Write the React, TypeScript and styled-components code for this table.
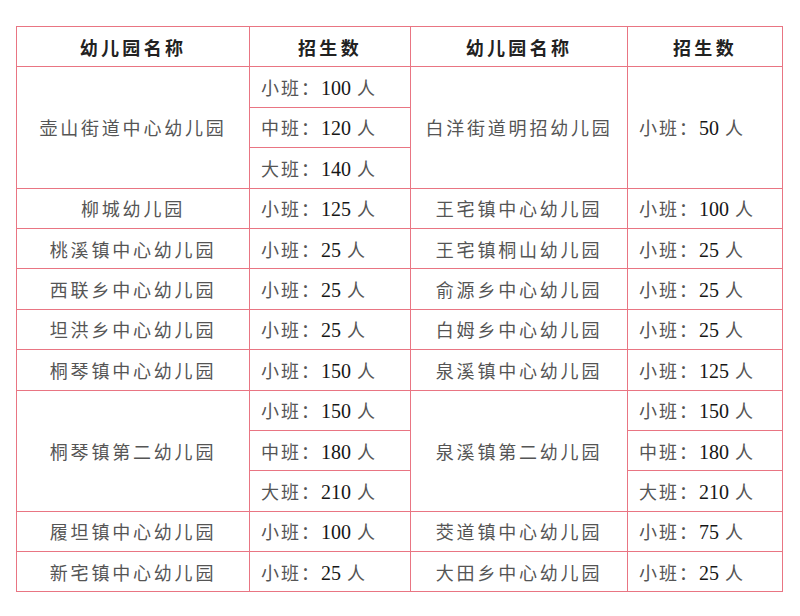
import styled, { createGlobalStyle } from 'styled-components';

const GlobalStyle = createGlobalStyle`
  html, body {
    margin: 0;
    padding: 0;
    background: #ffffff;
  }
`;

const Page = styled.div`
  padding: 26px 0 0 16px;
`;

const Table = styled.table`
  width: 766px;
  border-collapse: collapse;
  table-layout: fixed;
  font-family: "Noto Sans CJK SC", "Liberation Serif", serif;
  font-size: 18px;
  color: #555555;
`;

const Row = styled.tr`
  height: 40.4px;
`;

const HeadCell = styled.th`
  border: 1px solid #e97583;
  padding: 0;
  font-weight: 700;
  color: #222222;
  letter-spacing: 3.3px;
  text-align: center;
`;

const NameCell = styled.td`
  border: 1px solid #e97583;
  padding: 0;
  text-align: center;
  letter-spacing: 2.8px;
  white-space: nowrap;
`;

const CountCell = styled.td`
  border: 1px solid #e97583;
  padding: 0 0 0 11px;
  text-align: left;
  white-space: nowrap;
  letter-spacing: 2px;
`;

const Num = styled.span`
  font-family: "Liberation Serif", serif;
  font-size: 20px;
  color: #161616;
  letter-spacing: 0;
`;

type Count = [string, string];
type Side = { name: string; counts: Count[] };
type Group = { size: number; left: Side; right: Side };

const groups: Group[] = [
  {
    size: 3,
    left: {
      name: '壶山街道中心幼儿园',
      counts: [
        ['小班', '100'],
        ['中班', '120'],
        ['大班', '140'],
      ],
    },
    right: { name: '白洋街道明招幼儿园', counts: [['小班', '50']] },
  },
  {
    size: 1,
    left: { name: '柳城幼儿园', counts: [['小班', '125']] },
    right: { name: '王宅镇中心幼儿园', counts: [['小班', '100']] },
  },
  {
    size: 1,
    left: { name: '桃溪镇中心幼儿园', counts: [['小班', '25']] },
    right: { name: '王宅镇桐山幼儿园', counts: [['小班', '25']] },
  },
  {
    size: 1,
    left: { name: '西联乡中心幼儿园', counts: [['小班', '25']] },
    right: { name: '俞源乡中心幼儿园', counts: [['小班', '25']] },
  },
  {
    size: 1,
    left: { name: '坦洪乡中心幼儿园', counts: [['小班', '25']] },
    right: { name: '白姆乡中心幼儿园', counts: [['小班', '25']] },
  },
  {
    size: 1,
    left: { name: '桐琴镇中心幼儿园', counts: [['小班', '150']] },
    right: { name: '泉溪镇中心幼儿园', counts: [['小班', '125']] },
  },
  {
    size: 3,
    left: {
      name: '桐琴镇第二幼儿园',
      counts: [
        ['小班', '150'],
        ['中班', '180'],
        ['大班', '210'],
      ],
    },
    right: {
      name: '泉溪镇第二幼儿园',
      counts: [
        ['小班', '150'],
        ['中班', '180'],
        ['大班', '210'],
      ],
    },
  },
  {
    size: 1,
    left: { name: '履坦镇中心幼儿园', counts: [['小班', '100']] },
    right: { name: '茭道镇中心幼儿园', counts: [['小班', '75']] },
  },
  {
    size: 1,
    left: { name: '新宅镇中心幼儿园', counts: [['小班', '25']] },
    right: { name: '大田乡中心幼儿园', counts: [['小班', '25']] },
  },
];

const CountText = ({ count }: { count: Count }) => (
  <>
    {count[0]}：<Num>{count[1]}</Num> 人
  </>
);

// name cell spans the whole group; counts either one per sub-row or one spanning all
const sideCells = (side: Side, size: number, i: number, prefix: string) => {
  const cells = [];
  if (i === 0) {
    cells.push(
      <NameCell key={`${prefix}-name`} rowSpan={size}>
        {side.name}
      </NameCell>
    );
  }
  if (side.counts.length === size) {
    cells.push(
      <CountCell key={`${prefix}-count`}>
        <CountText count={side.counts[i]} />
      </CountCell>
    );
  } else if (i === 0) {
    cells.push(
      <CountCell key={`${prefix}-count`} rowSpan={size}>
        <CountText count={side.counts[0]} />
      </CountCell>
    );
  }
  return cells;
};

export default function App() {
  return (
    <Page>
      <GlobalStyle />
      <Table>
        <colgroup>
          <col style={{ width: 233 }} />
          <col style={{ width: 161 }} />
          <col style={{ width: 217 }} />
          <col style={{ width: 155 }} />
        </colgroup>
        <thead>
          <Row>
            <HeadCell>幼儿园名称</HeadCell>
            <HeadCell>招生数</HeadCell>
            <HeadCell>幼儿园名称</HeadCell>
            <HeadCell>招生数</HeadCell>
          </Row>
        </thead>
        <tbody>
          {groups.flatMap((g, gi) =>
            Array.from({ length: g.size }, (_, i) => (
              <Row key={`${gi}-${i}`}>
                {sideCells(g.left, g.size, i, 'l')}
                {sideCells(g.right, g.size, i, 'r')}
              </Row>
            ))
          )}
        </tbody>
      </Table>
    </Page>
  );
}
